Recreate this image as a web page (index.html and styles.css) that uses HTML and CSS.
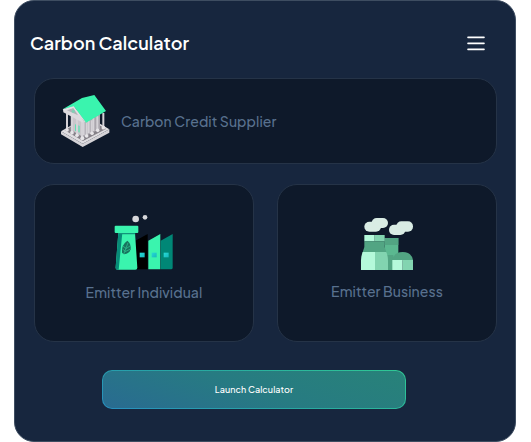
FILE: index.html
```html
<!DOCTYPE html>
<html lang="en">
<head>
<meta charset="utf-8">
<title>Carbon Calculator</title>
<link rel="stylesheet" href="styles.css">
</head>
<body>
<main class="panel">
  <header class="header">
    <h1 class="title">Carbon Calculator</h1>
    <button class="menu" aria-label="Menu">
      <svg width="18" height="16" viewBox="0 0 18 16" fill="none" stroke="#fff" stroke-width="1.6" stroke-linecap="round"><path d="M1 2.4h16M1 8.4h16M1 14.4h16"/></svg>
    </button>
  </header>
  <section class="cards">
    <article class="card card-wide">
      <svg width="50" height="54" viewBox="30 27 150 162">
        <path d="M33 139L98 176L178 133V143L98 186L33 148Z" fill="#d5d3d7"/>
        <path d="M33 139L112 94L178 133L98 176Z" fill="#e0dee1"/>
        <path d="M44 136L110 98L168 132L99 168Z" fill="#858188"/>
        <path d="M62 84L108 70L150 82V132L99 157L62 136Z" fill="#aaa6ad"/>
        <path d="M64 86L94 105V152L64 134Z" fill="#c9c6cb"/>
        <path d="M101 108V151M116 106V145M130 98V138" stroke="#d6d3d8" stroke-width="6"/>
        <g stroke="#d5d2d7" stroke-width="6"><path d="M51 80V134M66 94V143M81 102V151M96 108V160M110 112V152M125 106V144M142 94V136M160 84V128"/></g>
        <path d="M75 117l3 2v20l-3-2zM85 121l4 2v20l-4-2z" fill="#63dfb3"/>
        <g fill="#e7e5e8"><circle cx="51" cy="135" r="5.5"/><circle cx="66" cy="143" r="5.5"/><circle cx="81" cy="151" r="5.5"/><circle cx="97" cy="160" r="6"/><circle cx="110" cy="153" r="5.5"/><circle cx="126" cy="145" r="5.5"/><circle cx="143" cy="136" r="5.5"/><circle cx="160" cy="128" r="5.5"/></g>
        <path d="M39 74L71 63L99 105V113L40 82Z" fill="#dcdade"/>
        <path d="M51 76L70 69L84 91Z" fill="#b3b2b8"/>
        <circle cx="70" cy="79" r="5" fill="#81cfb5"/>
        <path d="M38 73L96 39L133 30L168 78L108 113L72 65Z" fill="#3af4ae"/>
        <path d="M38 73L71 64L107 112L102 109L70 68L43 77Z" fill="#e5e3e6"/>
      </svg>
      <span class="label label-supplier">Carbon Credit Supplier</span>
    </article>
    <article class="card card-tile">
      <svg class="individual" width="60" height="56" viewBox="28 29 180 168">
        <defs><linearGradient id="glass" x2="1" y2="1"><stop stop-color="#27d9d5"/><stop offset="1" stop-color="#17b9bd"/></linearGradient></defs>
        <circle cx="93" cy="41" r="10" fill="#d7d7da"/>
        <circle cx="121" cy="36" r="7" fill="#d7d7da"/>
        <path d="M92 106L129 86V192H92Z" fill="#000"/>
        <path d="M131 106L167 86V192H131Z" fill="#3af4ae"/>
        <path d="M168 106L204 86V187Q204 192 199 192H168Z" fill="#008776"/>
        <path d="M41 82H91L98 187Q98 193 92 193H39Q32 193 33 186Z" fill="#3af4ae"/>
        <path d="M41 82H53L42 193H39Q32 193 33 186Z" fill="#078b78"/>
        <path d="M41 82H91L92 87H40Z" fill="#12947a"/>
        <rect x="30" y="61" width="71" height="22" rx="3" fill="#3af4ae"/>
        <g fill="url(#glass)"><rect x="105" y="142" width="15" height="14"/><rect x="141" y="142" width="15" height="14"/><rect x="177" y="142" width="15" height="14"/></g>
        <path d="M52 142Q49 119 68 106Q79 113 78 132Q74 145 58 147Z" fill="#18735e"/>
        <path d="M57 147L70 112M64 129L54 122M61 137L53 131M64 130L76 122M61 139L76 132" fill="none" stroke="#35d59c" stroke-width="1.8"/>
      </svg>
      <span class="label label-individual">Emitter Individual</span>
    </article>
    <article class="card card-tile">
      <svg class="business" width="54" height="54" viewBox="30 36 162 162">
        <g fill="#d9ece4"><rect x="43" y="50" width="50" height="30" rx="15"/><rect x="65" y="39" width="49" height="30" rx="15"/><rect x="117" y="59" width="49" height="31" rx="15"/><rect x="139" y="49" width="50" height="31" rx="15"/></g>
        <path d="M104 99H145V195H104Z" fill="#5bb890"/>
        <path d="M104 99H145V120H104Z" fill="#52a583"/>
        <path d="M110 150H130V195H110Z" fill="#52a583"/>
        <path d="M43 90H74V109H43Z" fill="#b4f9da"/>
        <path d="M74 90H104V109H74Z" fill="#82d4b0"/>
        <path d="M43 109H104V126L110 145H37L43 126Z" fill="#52a583"/>
        <path d="M38 141H75V195H33V166Q33 154 38 141Z" fill="#b4f9da"/>
        <path d="M75 141H109Q114 154 114 166V195H75Z" fill="#82d4b0"/>
        <path d="M127 166Q131 141 158 141Q185 141 189 166Z" fill="#52a583"/>
        <path d="M127 165H158V195H127Z" fill="#b4f9da"/>
        <path d="M158 165H189V195H158Z" fill="#82d4b0"/>
      </svg>
      <span class="label label-business">Emitter Business</span>
    </article>
  </section>
  <button class="launch"><span>Launch Calculator</span></button>
</main>
</body>
</html>
```

FILE: styles.css
```css
* { box-sizing: border-box; }
body { margin: 0; background: #fff; font-family: "Plus Jakarta Sans", Inter, sans-serif; }
.panel {
  width: 502px; height: 442px; margin-left: 14px;
  border: 1px solid #3e4d61; border-radius: 20px;
  background: #17263e;
  display: flex; flex-direction: column;
}
.header { display: flex; justify-content: space-between; align-items: center; height: 84px; padding: 0 30px 0 15px; }
.title { margin: 0; color: #fff; font-size: 18px; line-height: 24px; font-weight: 600; letter-spacing: .04px; white-space: nowrap; }
.menu { display: flex; padding: 0; border: 0; background: none; }
.cards { display: grid; grid-template-columns: 220px 220px; grid-template-rows: 86px 158px; gap: 20px 23px; margin: -7px 0 0 19px; }
.card { background: #0e192a; border: 1px solid #253347; border-radius: 20px; display: flex; align-items: center; }
.card-wide { grid-column: 1 / 3; padding-left: 25px; gap: 11px; }
.card-tile { flex-direction: column; }
.label { color: #59718f; font-size: 14px; line-height: 20px; font-weight: 500; letter-spacing: .07px; white-space: nowrap; }
.individual { margin: 30px 0 11px; }
.business { margin: 32px 0 10px; }
.launch {
  width: 304px; height: 39px; margin: 28px 0 0 87px; padding: 0;
  border: 1px solid transparent; border-radius: 10px;
  background: linear-gradient(20deg, #296b91, #277b82 50%, #288279) padding-box, linear-gradient(20deg, #278fc0, #27a6a2 45%, #2fc994) border-box;
  color: #fff; font: 500 9px/12px "Plus Jakarta Sans", Inter, sans-serif; letter-spacing: .07px;
}
```
